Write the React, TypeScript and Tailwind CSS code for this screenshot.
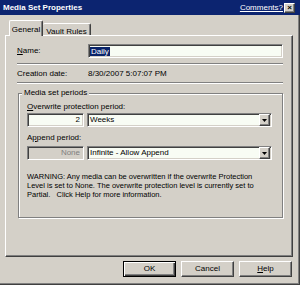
import type { ReactNode } from 'react'

const sunken =
  'border border-t-[#808080] border-l-[#808080] border-b-white border-r-white shadow-[inset_1px_1px_0_#404040,inset_-1px_-1px_0_#d4d0c8]'
const raised =
  'border border-t-white border-l-white border-b-[#404040] border-r-[#404040] shadow-[inset_-1px_-1px_0_#808080]'

const Combo = ({ value }: { value: string }) => (
  <div className={`flex h-[14px] w-[185px] items-center bg-[#f8fcf4] ${sunken}`}>
    <span className="flex-1 pl-[2px] leading-none">{value}</span>
    <span className={`mr-[1px] flex h-[12px] w-[11px] items-center justify-center bg-[#d4d0c8] ${raised}`}>
      <svg width="5" height="3" viewBox="0 0 5 3">
        <path d="M0 0h5L2.5 3z" fill="#000" />
      </svg>
    </span>
  </div>
)

const Button = ({ children, primary }: { children: ReactNode; primary?: boolean }) => (
  <button
    className={`flex h-[16px] w-[53px] items-center justify-center bg-[#d4d0c8] leading-none ${
      primary
        ? 'border border-black shadow-[inset_1px_1px_0_#fff,inset_-1px_-1px_0_#404040,inset_-2px_-2px_0_#808080]'
        : raised
    }`}
  >
    {children}
  </button>
)

const Etched = () => <div className="h-[2px] border-t border-t-[#808080] border-b border-b-white" />

export default function App() {
  return (
    <div
      className="flex h-[285px] w-[300px] flex-col bg-[#d4d0c8] text-[8px] text-black"
      style={{ fontFamily: '"Liberation Sans", Arial, sans-serif' }}
    >
      <div className="flex h-[15px] shrink-0 items-center justify-between bg-[#0c2470] pl-[3px] pr-[5px] text-white">
        <span className="font-bold">Media Set Properties</span>
        <div className="flex items-center gap-[1px]">
          <span className="underline">Comments?</span>
          <span
            className={`flex h-[10px] w-[11px] items-center justify-center bg-[#d4d0c8] text-[8px] font-bold leading-none text-black ${raised}`}
          >
            ×
          </span>
        </div>
      </div>

      <div className="flex flex-1 flex-col border-r border-b border-r-[#404040] border-b-[#404040] px-[5px] shadow-[inset_-1px_-1px_0_#808080]">
        <div className="mt-[5px] -mb-[1px] flex h-[16px] items-end pl-[4px]">
          <div className="relative z-10 flex h-[16px] w-[34px] items-start justify-center rounded-t-[2px] border-t border-l border-r border-t-white border-l-white border-r-[#404040] bg-[#d4d0c8] pt-[3px] shadow-[inset_-1px_0_0_#808080]">
            General
          </div>
          <div className="flex h-[13px] w-[48px] items-start justify-center rounded-t-[2px] border-t border-r border-t-white border-r-[#404040] pt-[2px] shadow-[inset_-1px_0_0_#808080]">
            Vault Rules
          </div>
        </div>

        <div className={`flex h-[222px] w-[288px] flex-col bg-[#d4d0c8] pl-[11px] pr-[9px] ${raised}`}>
          <div className="mt-[8px] flex h-[14px] items-center">
            <span className="w-[71px]">
              <span className="underline">N</span>ame:
            </span>
            <div className={`flex h-[14px] flex-1 items-center bg-[#f8fcf4] pl-[1px] ${sunken}`}>
              <span className="bg-[#0a246a] px-[1px] leading-[9px] text-white">Daily</span>
            </div>
          </div>

          <div className="mt-[5px]">
            <Etched />
          </div>

          <div className="mt-[4px] flex h-[10px] items-center">
            <span className="w-[71px]">Creation date:</span>
            <span>8/30/2007 5:07:07 PM</span>
          </div>

          <div className="mt-[3px]">
            <Etched />
          </div>

          <fieldset className="mt-[4px] ml-[1px] border border-[#808080] p-0 shadow-[inset_1px_1px_0_#fff,1px_1px_0_#fff]">
            <legend className="ml-[3px] bg-[#d4d0c8] px-[2px] leading-[10px]">Media set periods</legend>
            <div className="flex flex-col pb-[18px] pl-[8px]">
              <div className="mt-[4px] h-[10px] leading-[10px]">
                <span className="underline">O</span>verwrite protection period:
              </div>
              <div className="mt-[1px] flex gap-[3px]">
                <div className={`flex h-[14px] w-[57px] items-center justify-end bg-[#f8fcf4] pr-[3px] ${sunken}`}>
                  2
                </div>
                <Combo value="Weeks" />
              </div>

              <div className="mt-[6px] h-[10px] leading-[10px]">
                A<span className="underline">p</span>pend period:
              </div>
              <div className="mt-[3px] flex gap-[3px]">
                <div
                  className={`flex h-[14px] w-[57px] items-center justify-end bg-[#d4d0c8] pr-[3px] text-[#808080] ${sunken}`}
                >
                  None
                </div>
                <Combo value="Infinite - Allow Append" />
              </div>

              <p className="mt-[12px] text-[7.5px] leading-[9px]">
                WARNING: Any media can be overwritten if the overwrite Protection
                <br />
                Level is set to None. The overwrite protection level is currently set to
                <br />
                Partial.&nbsp;&nbsp; Click Help for more information.
              </p>
            </div>
          </fieldset>
        </div>

        <div className="mt-[4px] mr-[2px] flex justify-end gap-[5px]">
          <Button primary>OK</Button>
          <Button>Cancel</Button>
          <Button>
            <span>
              <span className="underline">H</span>elp
            </span>
          </Button>
        </div>
      </div>
    </div>
  )
}
